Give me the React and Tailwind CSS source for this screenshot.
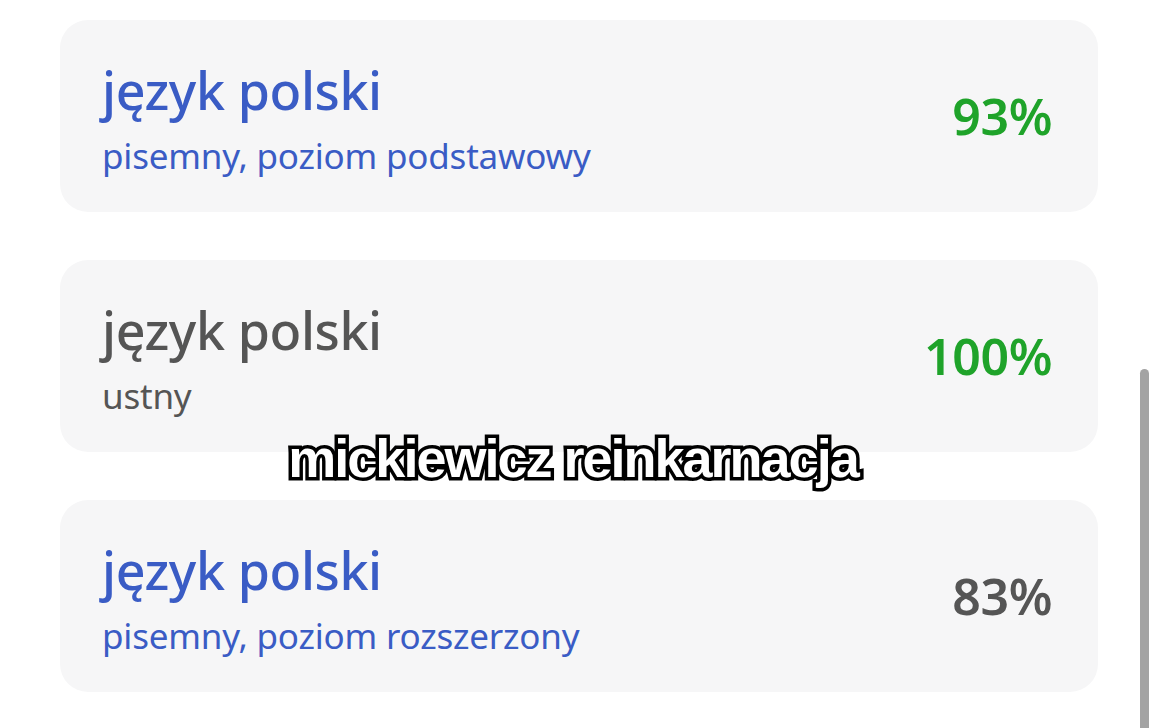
const results = [
  { subject: "język polski", detail: "pisemny, poziom podstawowy", score: "93%", tone: "blue", good: true },
  { subject: "język polski", detail: "ustny", score: "100%", tone: "gray", good: true },
  { subject: "język polski", detail: "pisemny, poziom rozszerzony", score: "83%", tone: "blue", good: false },
];

function ResultCard({ subject, detail, score, tone, good }) {
  const titleColor = tone === "blue" ? "text-[#3a5cc5]" : "text-[#555555]";
  return (
    <div className="flex h-[192px] items-center justify-between rounded-[28px] bg-[#f6f6f7] pl-[42px] pr-[46px]">
      <div className={`flex flex-col pt-[6px] ${titleColor}`}>
        <span className="text-[52px] font-medium leading-[56px] tracking-[-0.4px]">{subject}</span>
        <span className="mt-[18px] text-[35px] leading-[40px] tracking-[-0.2px]">{detail}</span>
      </div>
      <span
        className={`text-[50px] font-semibold tracking-[-0.4px] ${good ? "text-[#1fa32a]" : "text-[#555555]"}`}
      >
        {score}
      </span>
    </div>
  );
}

export default function App() {
  return (
    <div
      className="relative h-[728px] w-[1158px] overflow-hidden bg-white"
      style={{ fontFamily: "'Noto Sans', Lato, sans-serif" }}
    >
      <div className="flex w-[1098px] flex-col gap-[48px] pl-[60px] pt-[20px]">
        {results.map((r, i) => (
          <ResultCard key={i} {...r} />
        ))}
      </div>

      {/* scrollbar thumb */}
      <div className="absolute right-[9px] top-[369px] h-[380px] w-[9px] rounded-t-full bg-[#a3a3a3]" />

      {/* caption overlay */}
      <div
        className="absolute left-0 right-[12px] top-[428px] flex justify-center"
        style={{ fontFamily: "'Liberation Sans', Arial, sans-serif" }}
      >
        <span
          className="text-[54px] font-bold leading-[60px] tracking-[-2px] text-white [paint-order:stroke_fill] [-webkit-text-stroke:7px_black]"
        >
          mickiewicz reinkarnacja
        </span>
      </div>
    </div>
  );
}
